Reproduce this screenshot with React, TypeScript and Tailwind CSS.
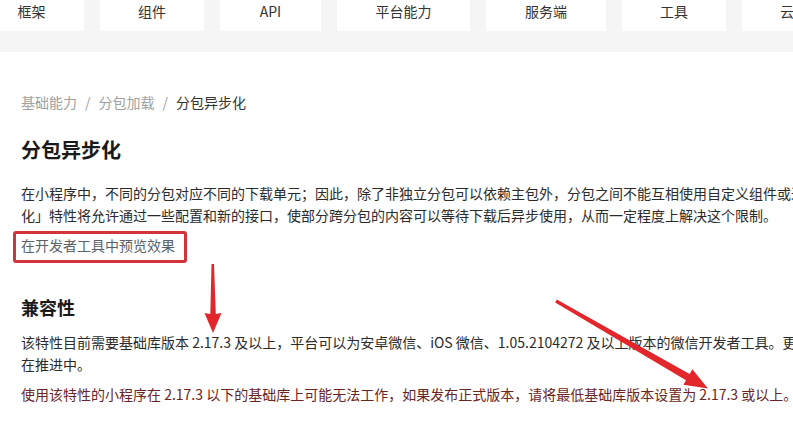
import React from "react";

const tabs = [
  { name: "框架", w: "w-[105px] -ml-[21px]" },
  { name: "组件", w: "w-[104px]" },
  { name: "API", w: "w-[101px]" },
  { name: "平台能力", w: "w-[133px]" },
  { name: "服务端", w: "w-[120px]" },
  { name: "工具", w: "w-[104px]" },
  { name: "云开发", w: "w-[118px]" },
];

const font = { fontFamily: '"Noto Sans CJK SC", "Noto Sans", sans-serif' };

export default function App() {
  return (
    <div className="relative w-full h-[428px] overflow-hidden bg-white text-[#333]" style={font}>
      {/* Top navigation */}
      <div className="h-[52px] bg-[#f5f5f5]">
        <div className="flex gap-4 w-[1000px]">
          {tabs.map((t) => (
            <div
              key={t.name}
              className={`${t.w} h-[31px] shrink-0 bg-white text-center text-[14px] leading-[23px] text-[#333]`}
            >
              {t.name}
            </div>
          ))}
        </div>
      </div>

      {/* Content */}
      <div className="w-[980px] pl-[21px] pt-[40px]">
        <div className="flex items-center text-[14px] leading-[20px]">
          <span className="text-[#a0a0a0]">基础能力</span>
          <span className="mx-[8px] text-[#a0a0a0]">/</span>
          <span className="text-[#a0a0a0]">分包加载</span>
          <span className="mx-[8px] text-[#a0a0a0]">/</span>
          <span className="text-[#333]">分包异步化</span>
        </div>

        <h1 className="mt-[24px] text-[20px] leading-[28px] font-bold text-[#1a1a1a]">分包异步化</h1>

        <p className="mt-[18px] text-[14px] leading-[22px] text-[#2b2b2b] whitespace-nowrap">
          在小程序中，不同的分包对应不同的下载单元；因此，除了非独立分包可以依赖主包外，分包之间不能互相使用自定义组件或进行 require。「分包异步
          <br />
          化」特性将允许通过一些配置和新的接口，使部分跨分包的内容可以等待下载后异步使用，从而一定程度上解决这个限制。
        </p>

        <div className="mt-[6px]">
          <span className="relative inline-block text-[14px] leading-[22px] text-[#5b5f66]">
            在开发者工具中预览效果
            <span className="absolute -left-[8px] -right-[12px] -top-[3px] -bottom-[7px] border-[3px] border-[#d3333a] rounded-[3px]" />
          </span>
        </div>

        <h2 className="mt-[38px] text-[18px] leading-[26px] font-bold text-[#1a1a1a]">兼容性</h2>

        <p className="mt-[11px] text-[14px] leading-[22px] text-[#2b2b2b] whitespace-nowrap">
          该特性目前需要基础库版本 2.17.3 及以上，平台可以为安卓微信、iOS 微信、1.05.2104272 及以上版本的微信开发者工具。更多平台的支持正
          <br />
          在推进中。
        </p>

        <p className="mt-[8px] text-[14px] leading-[22px] text-[#6a2424] whitespace-nowrap">
          使用该特性的小程序在 2.17.3 以下的基础库上可能无法工作，如果发布正式版本，请将最低基础库版本设置为 2.17.3 或以上。
        </p>
      </div>

      {/* Annotation arrows */}
      <svg className="absolute left-0 top-0 pointer-events-none" width="793" height="428" viewBox="0 0 793 428">
        <polygon
          fill="#e3262b"
          points="211.5,264 214,264 215.8,314 221.5,313 213,333 204.5,313 210.3,314"
        />
        <polygon
          fill="#e3262b"
          points="556.8,299.6 555.2,302.4 686,380.3 683.4,384.8 708,388.5 692.4,369.2 689.6,374"
        />
      </svg>
    </div>
  );
}
